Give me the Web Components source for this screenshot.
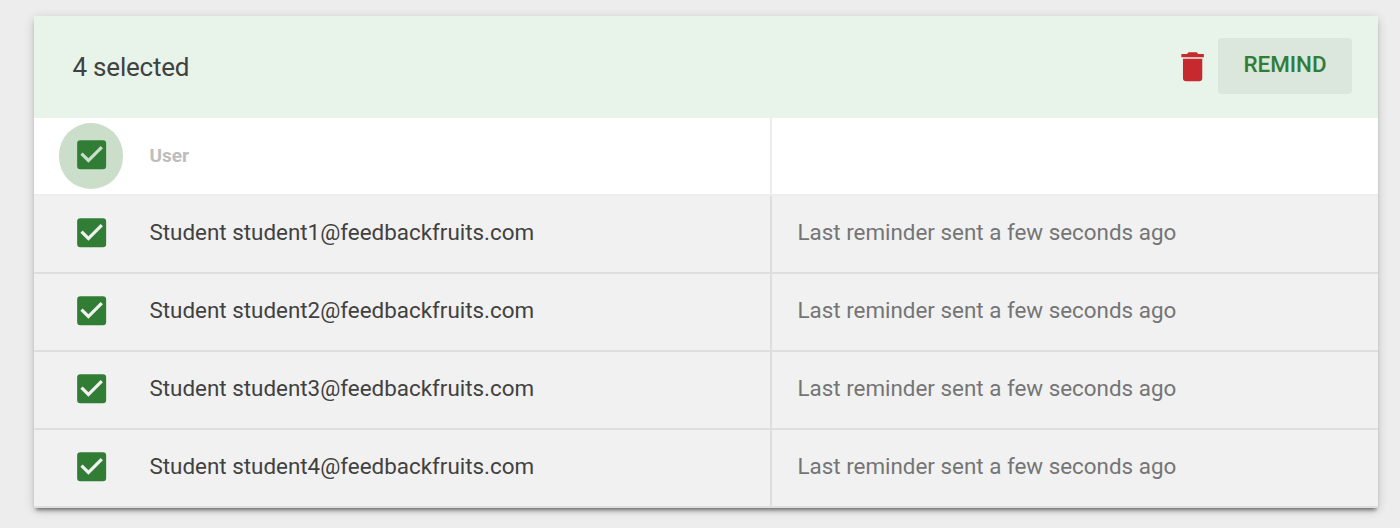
<!DOCTYPE html>
<html lang="en">
<head>
<meta charset="utf-8">
<title>Users</title>
<style>
  body {
    margin: 0;
    height: 528px;
    overflow: hidden;
    box-sizing: border-box;
    padding: 16px 22px 0 34px;
    background-color: #ededed;
    font-family: Roboto, sans-serif;
    color: #414141;
  }
</style>
</head>
<body>
<user-table>
  <selection-bar slot="header" count="4"></selection-bar>
  <user-row heading>User</user-row>
  <user-row status="Last reminder sent a few seconds ago">Student student1@feedbackfruits.com</user-row>
  <user-row status="Last reminder sent a few seconds ago">Student student2@feedbackfruits.com</user-row>
  <user-row status="Last reminder sent a few seconds ago">Student student3@feedbackfruits.com</user-row>
  <user-row status="Last reminder sent a few seconds ago">Student student4@feedbackfruits.com</user-row>
</user-table>
<script>
class UserTable extends HTMLElement {
  constructor() {
    super();
    this.attachShadow({ mode: 'open' });
  }
  connectedCallback() {
    this.shadowRoot.innerHTML = `
      <style>
      :host {
        display: block;
        background-color: #fff;
        box-shadow: 0 4px 4px -2px rgba(0, 0, 0, .5), 0 2px 10px rgba(0, 0, 0, .16);
      }
      </style>
      <slot name="header"></slot>
      <slot></slot>`;
  }
}

class SelectionBar extends HTMLElement {
  constructor() {
    super();
    this.attachShadow({ mode: 'open' });
  }
  connectedCallback() {
    this.shadowRoot.innerHTML = `
      <style>
      :host {
        display: flex;
        align-items: center;
        box-sizing: border-box;
        height: 102px;
        padding: 0 26px 0 38.5px;
        background-color: #e8f3e9;
      }
      .count {
        flex: 1;
        font-size: 26px;
        line-height: 32px;
        letter-spacing: -.22px;
      }
      svg {
        width: 38.6px;
        height: 38.6px;
        margin: 0 6px 1px 0;
        fill: #c62a2f;
      }
      .remind {
        width: 134px;
        height: 56px;
        margin-bottom: 2px;
        padding: 0 0 5px;
        border: 0;
        border-radius: 4px;
        background-color: #dbe6dc;
        color: #327d36;
        font: 500 22.4px Roboto, sans-serif;
        text-transform: uppercase;
      }
      </style>
      <span class="count">${this.getAttribute('count')} selected</span>
      <svg viewBox="-.2 -.3 24 24"><path d="M19 4h-3.5l-1-1h-5l-1 1H5v2h14M6 19a2 2 0 0 0 2 2h8a2 2 0 0 0 2-2V7H6z"/></svg>
      <button class="remind">Remind</button>`;
  }
}

class CheckBox extends HTMLElement {
  constructor() {
    super();
    this.attachShadow({ mode: 'open' });
  }
  connectedCallback() {
    this.shadowRoot.innerHTML = `
      <style>
      :host {
        display: flex;
        align-items: center;
        justify-content: center;
        width: 64px;
        height: 66px;
        border-radius: 32px;
      }
      :host([focused]) {
        background-color: #cadeca;
      }
      svg {
        width: 38.67px;
        height: 38.67px;
        margin: 0 0 3px 1.3px;
        fill: #327d36;
      }
      </style>
      <svg viewBox="-.2 -.3 24 24"><path d="M10 17l-5-5 1.41-1.42L10 14.17l7.59-7.59L19 8M19 3H5a2 2 0 0 0-2 2v14a2 2 0 0 0 2 2h14a2 2 0 0 0 2-2V5a2 2 0 0 0-2-2z"/></svg>`;
  }
}

class UserRow extends HTMLElement {
  constructor() {
    super();
    this.attachShadow({ mode: 'open' });
  }
  connectedCallback() {
    const heading = this.hasAttribute('heading');
    this.shadowRoot.innerHTML = `
      <style>
      :host {
        --line: #dedede;
        display: grid;
        grid-template-columns: 738px 1fr;
        box-sizing: border-box;
        height: 78px;
        border-bottom: 2px solid var(--line);
        background-color: #f1f1f1;
        font-size: 22.4px;
        line-height: 28px;
      }
      :host([heading]) {
        --line: #ededed;
        background-color: #fff;
        color: #bdbdbd;
        font-size: 19px;
        font-weight: 700;
      }
      .user, .status {
        display: flex;
        align-items: center;
      }
      .user {
        gap: 26.5px;
        padding-left: 25px;
        border-right: 2px solid var(--line);
      }
      .name, .status {
        padding-bottom: 5px;
      }
      :host([heading]) .name {
        padding-bottom: 1px;
      }
      .status {
        padding-left: 25.5px;
        color: #757575;
      }
      </style>
      <div class="user">
        <check-box ${heading ? 'focused' : ''}></check-box>
        <span class="name"><slot></slot></span>
      </div>
      <div class="status">${this.getAttribute('status') || ''}</div>`;
  }
}

window.customElements.define('user-table', UserTable);
window.customElements.define('selection-bar', SelectionBar);
window.customElements.define('check-box', CheckBox);
window.customElements.define('user-row', UserRow);
</script>
</body>
</html>
